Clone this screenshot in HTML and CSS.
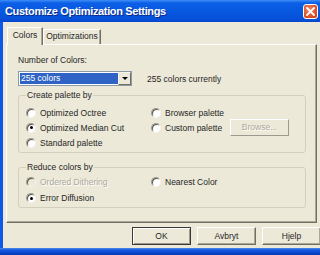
FILE: index.html
```html
<!DOCTYPE html>
<html lang="en">
<head>
  <meta charset="UTF-8" />
  <title>Customize Optimization Settings</title>
  <link rel="stylesheet" href="styles.css">
</head>
<body>
  <div class="window">
    <div class="titlebar">
      <span class="title">Customize Optimization Settings</span>
      <span class="close">
        <svg width="9" height="9" viewBox="0 0 9 9"><path d="M1 1 L8 8 M8 1 L1 8" stroke="#fff" stroke-width="1.8" stroke-linecap="square"/></svg>
      </span>
    </div>
    <div class="client">
      <div class="tabs">
        <div class="tab active">Colors</div>
        <div class="tab">Optimizations</div>
      </div>
      <div class="panel">
        <div class="label">Number of Colors:</div>
        <div class="colors-row">
          <div class="select">
            <span class="select-value">255 colors</span>
            <span class="select-btn"><span class="arrow"></span></span>
          </div>
          <span class="current">255 colors currently</span>
        </div>

        <fieldset class="group palette">
          <legend>Create palette by</legend>
          <div class="options">
            <div class="opt"><span class="radio"></span>Optimized Octree</div>
            <div class="opt"><span class="radio"></span>Browser palette</div>
            <div></div>
            <div class="opt"><span class="radio checked"></span>Optimized Median Cut</div>
            <div class="opt"><span class="radio"></span>Custom palette</div>
            <div class="browse">Browse...</div>
            <div class="opt"><span class="radio"></span>Standard palette</div>
          </div>
        </fieldset>

        <fieldset class="group reduce">
          <legend>Reduce colors by</legend>
          <div class="options">
            <div class="opt disabled"><span class="radio"></span>Ordered Dithering</div>
            <div class="opt"><span class="radio"></span>Nearest Color</div>
            <div></div>
            <div class="opt"><span class="radio checked"></span>Error Diffusion</div>
          </div>
        </fieldset>
      </div>
      <div class="buttons">
        <div class="btn default">OK</div>
        <div class="btn">Avbryt</div>
        <div class="btn">Hjelp</div>
      </div>
    </div>
    <div class="frame-bottom"></div>
  </div>
</body>
</html>
```

FILE: styles.css
```css
* {
  box-sizing: border-box;
}
body {
  margin: 0;
  width: 320px;
  height: 255px;
  overflow: hidden;
  background: #ece9d8;
  font-family: 'Liberation Sans', Arial, sans-serif;
  font-size: 8.5px;
  color: #262626;
}
.window {
  width: 326px;
  height: 255px;
  display: flex;
  flex-direction: column;
}
.titlebar {
  height: 22px;
  flex: none;
  display: flex;
  align-items: center;
  justify-content: space-between;
  padding: 0 8px 0 5px;
  background: linear-gradient(#3f8df7 0, #0b5fe6 3px, #0757df 12px, #0651d8 19px, #0446cc 22px);
}
.title {
  color: #fff;
  font-weight: bold;
  font-size: 11px;
  letter-spacing: -0.35px;
  text-shadow: 1px 1px 0 #0b2a8a;
}
.close {
  width: 15px;
  height: 15px;
  border: 1px solid #fff;
  border-radius: 3px;
  background: radial-gradient(circle at 40% 35%, #f08a6a, #d9491f 70%);
  display: flex;
  align-items: center;
  justify-content: center;
}
.client {
  flex: 1;
  background: #ece9d8;
  border-left: 3px solid #0d58e6;
  border-right: 3px solid #0d58e6;
  padding: 5px 0 0 0;
}
.tabs {
  display: flex;
  align-items: flex-end;
  height: 17px;
  margin-left: 4px;
}
.tab {
  height: 15px;
  width: 58px;
  line-height: 13px;
  text-align: center;
  border: 1px solid #fff;
  border-right-color: #716f64;
  border-bottom: none;
  box-shadow: inset -1px 0 0 #aca899;
  background: #ece9d8;
}
.tab.active {
  width: 36px;
  height: 18px;
  margin-bottom: -1px;
  line-height: 15px;
  position: relative;
  z-index: 1;
}
.panel {
  margin-left: 3px;
  width: 311px;
  height: 179px;
  border: 1px solid #fff;
  border-right-color: #716f64;
  border-bottom-color: #716f64;
  box-shadow: inset -1px -1px 0 #aca899;
  padding: 9px 10px 0 11px;
}
.label {
  line-height: 12px;
}
.colors-row {
  display: flex;
  align-items: center;
  margin-top: 5px;
}
.select {
  width: 114px;
  height: 15px;
  border: 1px solid #8e9aa6;
  background: #fff;
  display: flex;
  align-items: center;
  padding: 0 0 0 1px;
}
.select-value {
  flex: 1;
  height: 11px;
  line-height: 11px;
  background: #2f64c6;
  color: #fff;
  padding-left: 1px;
}
.select-btn {
  width: 13px;
  height: 13px;
  background: #ece9d8;
  border: 1px solid;
  border-color: #f4f3ee #716f64 #716f64 #f4f3ee;
  display: flex;
  align-items: center;
  justify-content: center;
}
.arrow {
  width: 0;
  height: 0;
  border-left: 3px solid transparent;
  border-right: 3px solid transparent;
  border-top: 3px solid #000;
}
.current {
  margin-left: 15px;
}
.group {
  margin: 3px 0 0 0;
  padding: 0 0 2px 7px;
  border: 1px solid #d0d0bf;
  border-radius: 3px;
  min-width: 0;
}
.group legend {
  padding: 0 1px;
  line-height: 12px;
}
.reduce {
  margin-top: 8px;
  padding-bottom: 1px;
}
.options {
  display: grid;
  grid-template-columns: 125px 79px 59px;
  grid-auto-rows: 15px;
  align-items: center;
  padding-top: 4px;
}
.reduce .options {
  grid-auto-rows: 16px;
  padding-top: 1px;
}
.opt {
  display: flex;
  align-items: center;
  white-space: nowrap;
}
.radio {
  width: 10px;
  height: 10px;
  margin-right: 4px;
  border-radius: 50%;
  background: #fff;
  border: 1px solid;
  border-color: #9c9a8e #f4f3ee #f4f3ee #9c9a8e;
  box-shadow: inset 1px 1px 0 #5a584e;
  display: flex;
  align-items: center;
  justify-content: center;
}
.radio.checked::after {
  content: '';
  width: 3px;
  height: 3px;
  border-radius: 50%;
  background: #000;
}
.opt.disabled {
  color: #aca899;
  text-shadow: 1px 1px 0 #fff;
}
.opt.disabled .radio {
  background: #ece9d8;
}
.browse {
  height: 17px;
  line-height: 15px;
  text-align: center;
  color: #aca899;
  text-shadow: 1px 1px 0 #fff;
  border: 1px solid;
  border-color: #fff #9c9a8e #9c9a8e #fff;
}
.buttons {
  display: flex;
  justify-content: flex-end;
  gap: 6px;
  margin-top: 4px;
  padding-right: 2px;
}
.btn {
  width: 59px;
  height: 18px;
  line-height: 16px;
  text-align: center;
  border: 1px solid;
  border-color: #fff #716f64 #716f64 #fff;
  box-shadow: inset -1px -1px 0 #aca899;
}
.btn.default {
  border-color: #3a3a36;
  box-shadow: inset 1px 1px 0 #fff, inset -1px -1px 0 #9c9a8e;
}
.frame-bottom {
  height: 7px;
  flex: none;
  background: linear-gradient(#4f8cf0 0, #1459de 2px, #0a46cc 5px, #0535b0 7px);
}
```
